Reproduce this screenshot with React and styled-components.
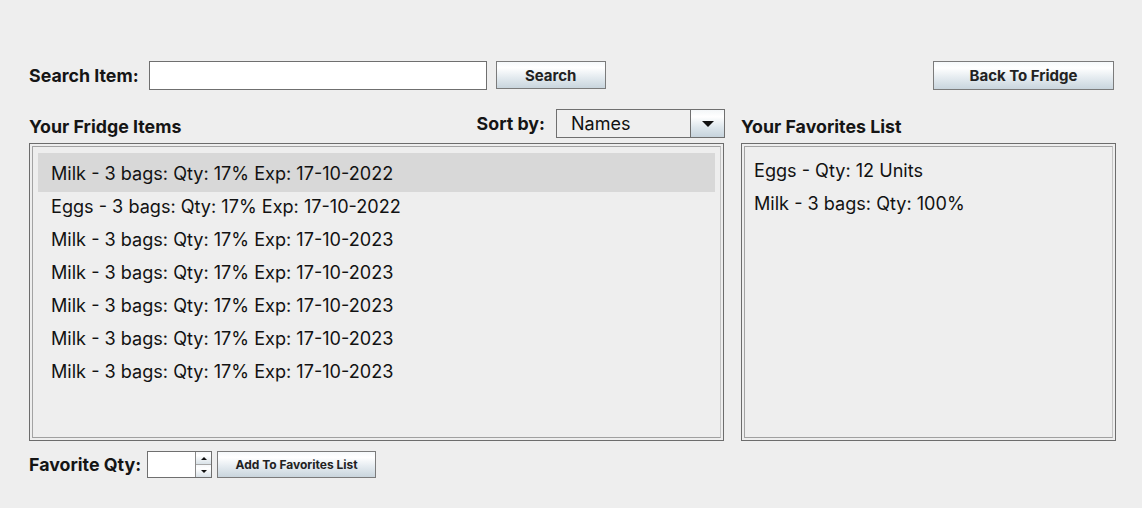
import React from "react";
import styled, { createGlobalStyle } from "styled-components";

const GlobalStyle = createGlobalStyle`
  html, body {
    margin: 0;
    padding: 0;
    background: #eeeeee;
  }
  body {
    font-family: Inter, "Noto Sans", sans-serif;
    color: #161616;
  }
`;

const Page = styled.div`
  width: 1142px;
  height: 508px;
  box-sizing: border-box;
  padding: 60px 28px 0 29px;
  background: #eeeeee;
`;

const TopBar = styled.div`
  display: flex;
  align-items: center;
  height: 30px;
`;

const Label = styled.span`
  font-weight: 700;
  font-size: ${({ size }) => size || "17.8px"};
  color: #151515;
  white-space: nowrap;
`;

const TextField = styled.input`
  box-sizing: border-box;
  width: ${({ width }) => width}px;
  height: ${({ height }) => height || 29}px;
  margin-left: ${({ gap }) => gap || 0}px;
  border: 1px solid #6f6f6f;
  background: #ffffff;
  padding: 0 6px;
  outline: none;
  font-family: inherit;
  font-size: 15px;
`;

const Button = styled.button`
  box-sizing: border-box;
  width: ${({ width }) => width}px;
  height: ${({ height }) => height || 28}px;
  margin-left: ${({ gap }) => gap || 0}px;
  border: 1px solid #7b7b7b;
  background: linear-gradient(to bottom, #f6f9fb 0%, #ffffff 22%, #e3eaef 60%, #c9d5dd 100%);
  font-family: inherit;
  font-weight: 700;
  font-size: ${({ size }) => size || "15px"};
  color: #222;
  padding: 0;
  cursor: pointer;
`;

const BackButton = styled(Button)`
  margin-left: auto;
`;

const Columns = styled.div`
  display: grid;
  grid-template-columns: 695px 375px;
  column-gap: 17px;
  margin-top: 19px;
`;

const Column = styled.div`
  display: flex;
  flex-direction: column;
`;

const Header = styled.div`
  display: flex;
  align-items: center;
  height: 29px;
`;

const Title = styled(Label)`
  margin-top: 6px;
`;

const SortGroup = styled.div`
  display: flex;
  align-items: center;
  margin-left: auto;
  margin-right: -1px;
  gap: 11px;
`;

const Combo = styled.div`
  box-sizing: border-box;
  display: flex;
  width: 169px;
  height: 29px;
  border: 1px solid #6f6f6f;
  background: #efefef;
`;

const ComboText = styled.span`
  flex: 1;
  display: flex;
  align-items: center;
  padding-left: 14px;
  font-size: 18px;
  color: #111;
`;

const ArrowBox = styled.div`
  width: 33px;
  display: flex;
  align-items: center;
  justify-content: center;
  border-left: 1px solid #6f6f6f;
  background: linear-gradient(to bottom, #f3f6f8 0%, #ffffff 25%, #dde6ec 65%, #c6d3dc 100%);
`;

const Triangle = styled.span`
  width: 0;
  height: 0;
  border-left: ${({ w }) => w}px solid transparent;
  border-right: ${({ w }) => w}px solid transparent;
  ${({ up, h }) => (up ? `border-bottom: ${h}px solid #111;` : `border-top: ${h}px solid #111;`)}
`;

const ListFrame = styled.div`
  box-sizing: border-box;
  margin-top: 5px;
  height: 298px;
  border: 1px solid #6c6c6c;
  padding: 2px;
`;

const ListInner = styled.div`
  box-sizing: border-box;
  height: 100%;
  border-top: 1px solid #a3a3a3;
  border-left: 1px solid #a3a3a3;
  border-right: 1px solid #c4c4c4;
  border-bottom: 1px solid #a0a0a0;
  padding: ${({ top }) => top}px 5px 0 5px;
`;

const Row = styled.div`
  height: ${({ selected }) => (selected ? 39 : 33)}px;
  margin: ${({ selected }) => (selected ? "-3px 0" : "0")};
  display: flex;
  align-items: center;
  padding-left: ${({ inset }) => inset}px;
  background: ${({ selected }) => (selected ? "#d8d8d8" : "transparent")};
  font-size: 18.1px;
  color: #121212;
  white-space: nowrap;
`;

const BottomBar = styled.div`
  display: flex;
  align-items: center;
  margin-top: 10px;
  height: 27px;
`;

const Spinner = styled.div`
  box-sizing: border-box;
  display: flex;
  width: 65px;
  height: 27px;
  margin-left: 6px;
  border: 1px solid #6f6f6f;
  background: #fff;
`;

const SpinnerField = styled.div`
  flex: 1;
`;

const SpinnerArrows = styled.div`
  width: 15px;
  display: flex;
  flex-direction: column;
  border-left: 1px solid #8a8a8a;
`;

const SpinnerHalf = styled.div`
  flex: 1;
  display: flex;
  align-items: center;
  justify-content: center;
  background: linear-gradient(to bottom, #f6f8fa 0%, #ffffff 30%, #d9e2e8 100%);
  & + & {
    border-top: 1px solid #a8a8a8;
  }
`;

const fridgeItems = [
  "Milk - 3 bags: Qty: 17% Exp: 17-10-2022",
  "Eggs - 3 bags: Qty: 17% Exp: 17-10-2022",
  "Milk - 3 bags: Qty: 17% Exp: 17-10-2023",
  "Milk - 3 bags: Qty: 17% Exp: 17-10-2023",
  "Milk - 3 bags: Qty: 17% Exp: 17-10-2023",
  "Milk - 3 bags: Qty: 17% Exp: 17-10-2023",
  "Milk - 3 bags: Qty: 17% Exp: 17-10-2023",
];

const favorites = ["Eggs - Qty: 12 Units", "Milk - 3 bags: Qty: 100%"];

const App = () => {
  return (
    <>
      <GlobalStyle />
      <Page>
        <TopBar>
          <Label>Search Item:</Label>
          <TextField width={338} gap={10} />
          <Button width={110} gap={9}>Search</Button>
          <BackButton width={181} height={29}>Back To Fridge</BackButton>
        </TopBar>

        <Columns>
          <Column>
            <Header>
              <Title>Your Fridge Items</Title>
              <SortGroup>
                <Label>Sort by:</Label>
                <Combo>
                  <ComboText>Names</ComboText>
                  <ArrowBox>
                    <Triangle w={6} h={6} />
                  </ArrowBox>
                </Combo>
              </SortGroup>
            </Header>
            <ListFrame>
              <ListInner top={9}>
                {fridgeItems.map((item, i) => (
                  <Row key={i} inset={13} selected={i === 0}>
                    {item}
                  </Row>
                ))}
              </ListInner>
            </ListFrame>
            <BottomBar>
              <Label>Favorite Qty:</Label>
              <Spinner>
                <SpinnerField />
                <SpinnerArrows>
                  <SpinnerHalf>
                    <Triangle up w={3} h={3} />
                  </SpinnerHalf>
                  <SpinnerHalf>
                    <Triangle w={3} h={3} />
                  </SpinnerHalf>
                </SpinnerArrows>
              </Spinner>
              <Button width={159} height={27} gap={5} size="12px">
                Add To Favorites List
              </Button>
            </BottomBar>
          </Column>

          <Column>
            <Header>
              <Title>Your Favorites List</Title>
            </Header>
            <ListFrame>
              <ListInner top={6}>
                {favorites.map((item, i) => (
                  <Row key={i} inset={4}>
                    {item}
                  </Row>
                ))}
              </ListInner>
            </ListFrame>
          </Column>
        </Columns>
      </Page>
    </>
  );
};

export default App;
